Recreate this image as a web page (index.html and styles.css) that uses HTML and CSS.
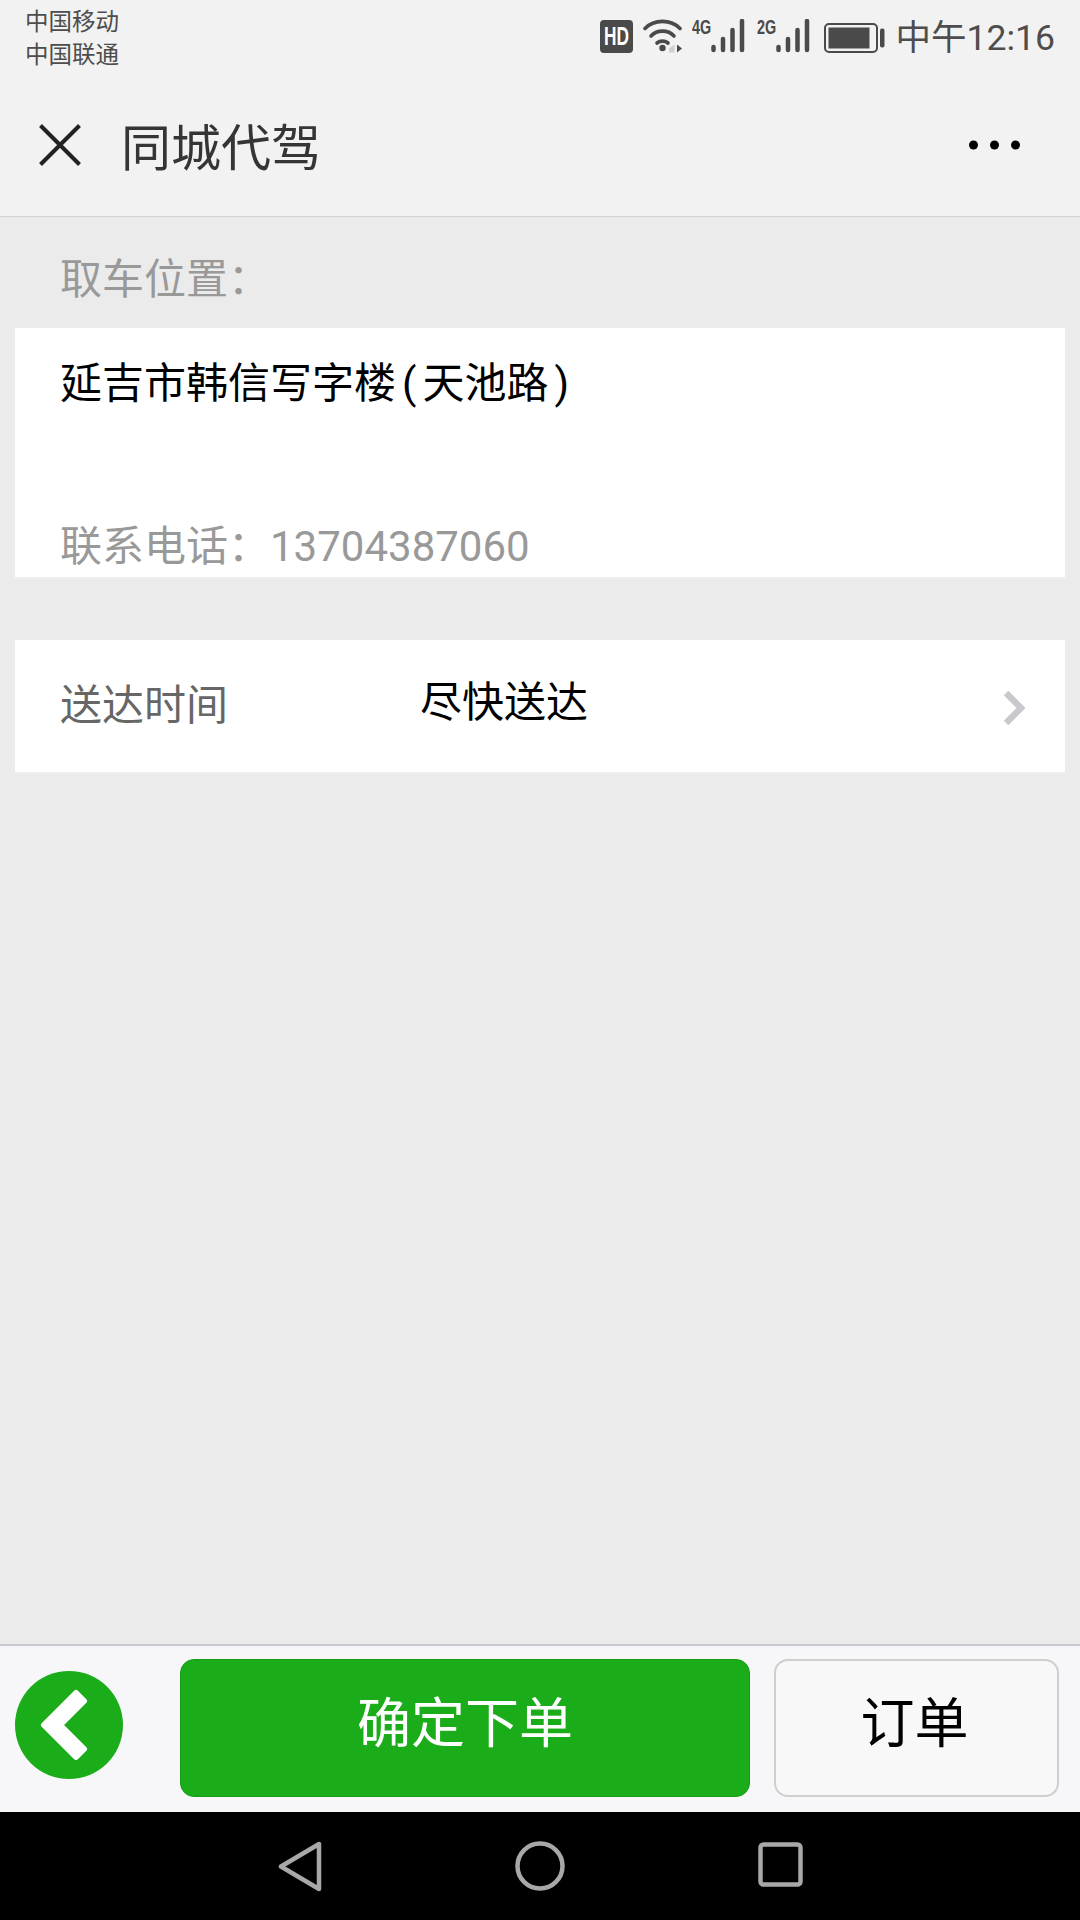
FILE: index.html
```html
<!DOCTYPE html>
<html lang="zh-CN">
<head>
<meta charset="utf-8">
<title>同城代驾</title>
<link rel="stylesheet" href="styles.css">
</head>
<body>
<div class="screen">
  <header class="top">
    <div class="status">
      <div class="carriers">
        <div>中国移动</div>
        <div>中国联通</div>
      </div>
      <div class="status-right">
        <svg class="ic-hd" width="33" height="33" viewBox="0 0 33 33"><rect width="33" height="33" rx="4" fill="#4a4a4a"/><text x="4" y="25" class="hd-text" textLength="25" lengthAdjust="spacingAndGlyphs">HD</text></svg>
        <svg class="ic-wifi" width="39" height="34" viewBox="0 0 39 34"><g fill="none" stroke="#4a4a4a" stroke-width="3.6" stroke-linecap="round"><path d="M2 9.500C11 0 28 0 37 9.500"/><path d="M8 17C14 10.500 25 10.500 31 17"/><path d="M14 24C17 21.500 22 21.500 25 24"/></g><circle cx="19.500" cy="29" r="3.200" fill="#4a4a4a"/><path d="M26 29.500L31.500 25.500V33.500H26Z" fill="#cfcfcf"/><path d="M34 25.500L39 29.500L34 33.500Z" fill="#4a4a4a"/></svg>
        <div class="sig">
          <span class="sig-text">4G</span>
          <svg width="53" height="34" viewBox="0 0 53 34"><g fill="none" stroke="#4a4a4a" stroke-width="4.500" stroke-linecap="round"><path d="M21.500 28V31"/><path d="M31 20V31"/><path d="M40.500 11V31"/><path d="M50 2V31"/></g></svg>
        </div>
        <div class="sig sig-last">
          <span class="sig-text">2G</span>
          <svg width="53" height="34" viewBox="0 0 53 34"><g fill="none" stroke="#4a4a4a" stroke-width="4.500" stroke-linecap="round"><path d="M21.500 28V31"/><path d="M31 20V31"/><path d="M40.500 11V31"/><path d="M50 2V31"/></g></svg>
        </div>
        <svg class="ic-bat" width="61" height="30" viewBox="0 0 61 30"><rect x="1" y="1" width="52" height="28" rx="4" fill="none" stroke="#4a4a4a" stroke-width="2"/><rect x="4.500" y="4.500" width="41" height="21" fill="#4a4a4a"/><rect x="56" y="5.500" width="4.500" height="19" rx="2" fill="#4a4a4a"/></svg>
        <span class="clock">中午12:16</span>
      </div>
    </div>
    <div class="titlebar">
      <svg class="ic-close" width="42" height="42" viewBox="0 0 42 42"><path d="M1.500 1.500L40.500 40.500M40.500 1.500L1.500 40.500" stroke="#222" stroke-width="4" fill="none"/></svg>
      <h1 class="title">同城代驾</h1>
      <svg class="ic-more" width="51" height="10" viewBox="0 0 51 10"><circle cx="4.500" cy="5" r="4.500"/><circle cx="25.500" cy="5" r="4.500"/><circle cx="46.500" cy="5" r="4.500"/></svg>
    </div>
  </header>

  <main class="content">
    <div class="section-label">取车位置：</div>
    <section class="card card-address">
      <div class="address">延吉市韩信写字楼<span class="paren">(</span>天池路<span class="paren">)</span></div>
      <div class="phone">联系电话：<span class="digits">13704387060</span></div>
    </section>
    <section class="card card-time">
      <span class="time-label">送达时间</span>
      <span class="time-value">尽快送达</span>
      <svg class="ic-chevron" width="22" height="36" viewBox="0 0 22 36"><path d="M3 3L18 18L3 33" fill="none" stroke="#c8c8cd" stroke-width="6.500"/></svg>
    </section>
  </main>

  <footer class="actions">
    <div class="back">
      <svg width="108" height="108" viewBox="0 0 108 108"><circle cx="54" cy="54" r="54" fill="#1aad19"/><path d="M61 22L29 54L61 86L69 78L45 54L69 30Z" fill="#fff" stroke="#fff" stroke-width="6" stroke-linejoin="round"/></svg>
    </div>
    <button class="btn btn-primary">确定下单</button>
    <button class="btn btn-default">订单</button>
  </footer>

  <nav class="navbar">
    <svg width="44" height="51" viewBox="0 0 44 51"><path d="M41 3V48L3 25.500Z" fill="none" stroke="#a8a8a8" stroke-width="4.500" stroke-linejoin="round"/></svg>
    <svg width="50" height="50" viewBox="0 0 50 50"><circle cx="25" cy="25" r="22.500" fill="none" stroke="#a8a8a8" stroke-width="4.500"/></svg>
    <svg width="45" height="45" viewBox="0 0 45 45"><rect x="2.500" y="2.500" width="40" height="40" rx="3" fill="none" stroke="#a8a8a8" stroke-width="4.500"/></svg>
  </nav>
</div>
</body>
</html>
```
FILE: styles.css
```css
* { box-sizing: border-box; }
html, body { margin: 0; padding: 0; }
body { font-family: "Noto Sans CJK SC", Roboto, sans-serif; background: #ebebeb; }
.screen { width: 1080px; height: 1920px; display: flex; flex-direction: column; overflow: hidden; }

.top { height: 217px; background: #f2f2f2; border-bottom: 1px solid #d2d2d2; }
.status { height: 76px; padding: 8px 25px 0 25px; display: flex; justify-content: space-between; align-items: flex-start; }
.carriers { font-size: 23.5px; line-height: 33px; color: #4d4d4d; margin-top: -4px; }
.status-right { display: flex; align-items: flex-start; margin-top: 11px; }
.ic-hd { margin-top: 1px; margin-right: 10px; overflow: visible; }
.ic-wifi { margin-right: 10px; }
.sig { position: relative; width: 53px; height: 34px; margin-right: 12px; }
.sig-last { margin-right: 14px; }
.ic-bat { margin: 4px 11px 0 0; }
.hd-text { font: bold 25px "Liberation Sans", sans-serif; fill: #fff; }
.sig-text { position: absolute; left: 0; top: 0; font: bold 20px/16px "Liberation Sans", sans-serif; color: #4a4a4a; transform: scaleX(0.72); transform-origin: left top; }
.clock { font-family: Roboto, "Noto Sans CJK SC", sans-serif; font-size: 35.5px; line-height: 38px; color: #4d4d4d; }

.titlebar { display: flex; align-items: center; padding: 0 60px 0 39px; height: 140px; }
.ic-close { margin-top: -2px; }
.title { margin: -4px 0 0 40px; font-size: 50px; font-weight: 400; color: #353535; line-height: 60px; flex: 1; }
.ic-more { fill: #000; margin-top: -2px; }

.content { flex: 1; padding: 0 15px; }
.section-label { padding: 29px 0 0 45px; margin-bottom: 22px; font-size: 42px; line-height: 60px; color: #999; }
.card { background: #fff; border-bottom: 1px solid #efefef; padding-left: 45px; }
.card-address { height: 250px; display: flex; flex-direction: column; justify-content: space-between; }
.address { font-size: 42px; line-height: 104px; color: #000; }
.paren { font-family: Roboto, sans-serif; padding: 0 6px; }
.phone { font-size: 42px; line-height: 60px; color: #999; }
.digits { font-family: Roboto, sans-serif; }
.card-time { margin-top: 62px; height: 133px; display: flex; align-items: center; padding-right: 40px; }
.time-label { flex: 0 0 360px; font-size: 42px; line-height: 60px; color: #666; margin-bottom: 8px; }
.time-value { font-size: 42px; line-height: 60px; color: #000; margin-bottom: 14px; }
.ic-chevron { margin-left: auto; margin-top: 4px; }

.actions { height: 168px; background: #f7f7f9; border-top: 2px solid #c9c9d0; padding: 13px 21px 0 15px; display: flex; align-items: flex-start; }
.back { width: 108px; height: 108px; margin-top: 12px; margin-right: 57px; line-height: 0; }
.btn { height: 138px; font-family: inherit; font-size: 54px; line-height: 60px; padding: 0 0 16px; border-radius: 14px; }
.btn-primary { width: 570px; background: #1aad19; border: 1px solid #179b16; color: #fff; margin-right: 24px; }
.btn-default { width: 285px; background: #f8f8f8; border: 2px solid #cfcfcf; color: #000; padding-right: 4px; }

.navbar { height: 108px; background: #000; display: flex; align-items: center; }
.navbar svg:nth-child(1) { margin-left: 278px; }
.navbar svg:nth-child(2) { margin-left: 193px; }
.navbar svg:nth-child(3) { margin-left: 193px; margin-top: -3px; }
```
